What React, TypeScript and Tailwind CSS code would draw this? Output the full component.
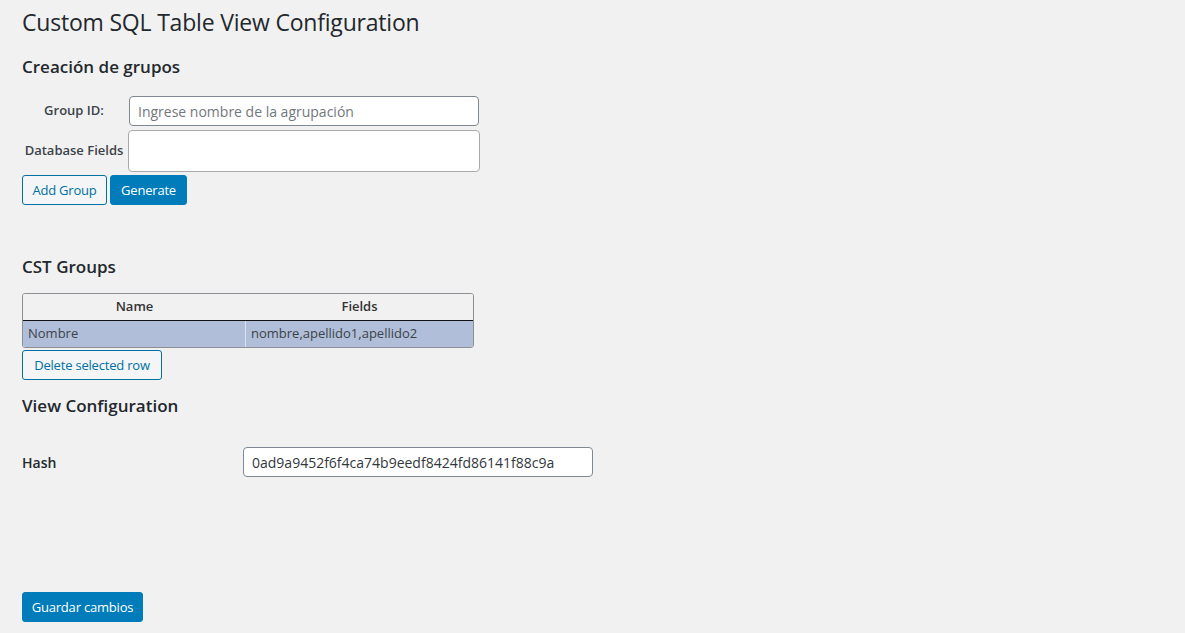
import { useState } from "react";

type Group = {
  name: string;
  fields: string;
};

const btnSecondary =
  "block h-[30px] rounded-[3px] border border-[#0071a1] bg-[#f3f5f6] text-[13px] text-[#0071a1] leading-none whitespace-nowrap tracking-[-0.2px]";
const btnPrimary =
  "block h-[30px] rounded-[3px] border border-[#007cba] bg-[#007cba] text-[13px] text-white leading-none whitespace-nowrap tracking-[-0.2px]";

const App = () => {
  const [groups] = useState<Group[]>([
    { name: "Nombre", fields: "nombre,apellido1,apellido2" },
  ]);
  const [groupId, setGroupId] = useState("");
  const [hash, setHash] = useState("0ad9a9452f6f4ca74b9eedf8424fd86141f88c9a");

  return (
    <div
      className="min-h-screen bg-[#f1f1f1] pl-[22px] pt-[8px] text-[#23282d]"
      style={{ fontFamily: '"Open Sans", "Noto Sans", sans-serif' }}
    >
      <h1 className="text-[23px] leading-[29px] font-normal text-[#23282d] tracking-[-0.2px]">
        Custom SQL Table View Configuration
      </h1>

      {/* Creacion de grupos */}
      <h2 className="mt-[19px] text-[17px] leading-[22px] font-semibold">
        Creación de grupos
      </h2>
      <div className="mt-[18px] flex flex-col gap-[4px] w-[458px]">
        <div className="flex items-center">
          <label className="w-[104px] text-center text-[13px] font-semibold text-[#3c434a]">
            Group ID:
          </label>
          <input
            className="ml-[3px] w-[350px] h-[30px] rounded-[4px] border border-[#7e8993] bg-white px-[8px] text-[14px] text-[#32373c] placeholder:text-[#72777c] outline-none"
            placeholder="Ingrese nombre de la agrupación"
            value={groupId}
            onChange={(e) => setGroupId(e.target.value)}
          />
        </div>
        <div className="flex items-center">
          <label className="w-[104px] text-center text-[13px] font-semibold text-[#3c434a] whitespace-nowrap">
            Database Fields
          </label>
          <textarea className="ml-[2px] w-[352px] h-[42px] rounded-[4px] border border-[#a7aaad] bg-white resize-none outline-none" />
        </div>
      </div>
      <div className="mt-[3px] flex gap-[3px]">
        <button className={`${btnSecondary} w-[85px]`}>Add Group</button>
        <button className={`${btnPrimary} w-[77px]`}>Generate</button>
      </div>

      {/* CST Groups */}
      <h2 className="mt-[51px] text-[17px] leading-[22px] font-semibold">
        CST Groups
      </h2>
      <div className="mt-[15px] w-[452px] rounded-[3px] border border-[#8c8f94] overflow-hidden">
        <div className="flex h-[27px] items-center border-b border-[#111] bg-[#f1f1f1] text-[13px] font-semibold text-[#333]">
          <div className="w-[223px] text-center">Name</div>
          <div className="flex-1 text-center">Fields</div>
        </div>
        {groups.map((group, index) => (
          <div
            className="flex h-[26px] bg-[#b0bed9] text-[13px] text-[#3c434a]"
            key={index}
          >
            <div className="w-[223px] flex items-center px-[5px] border-r border-[#dde3ee]">
              {group.name}
            </div>
            <div className="flex-1 flex items-center px-[5px]">
              {group.fields}
            </div>
          </div>
        ))}
      </div>
      <button className={`${btnSecondary} mt-[2px] w-[140px]`}>
        Delete selected row
      </button>

      {/* View Configuration */}
      <h2 className="mt-[15px] text-[17px] leading-[22px] font-semibold">
        View Configuration
      </h2>
      <div className="mt-[30px] flex items-center">
        <label className="w-[221px] text-[14px] font-semibold text-[#23282d]">
          Hash
        </label>
        <input
          className="w-[350px] h-[30px] rounded-[4px] border border-[#7e8993] bg-white px-[8px] text-[14px] text-[#32373c] outline-none"
          value={hash}
          onChange={(e) => setHash(e.target.value)}
        />
      </div>

      <div className="mt-[115px] pb-[11px]">
        <button className={`${btnPrimary} w-[121px]`}>Guardar cambios</button>
      </div>
    </div>
  );
};

export default App;
